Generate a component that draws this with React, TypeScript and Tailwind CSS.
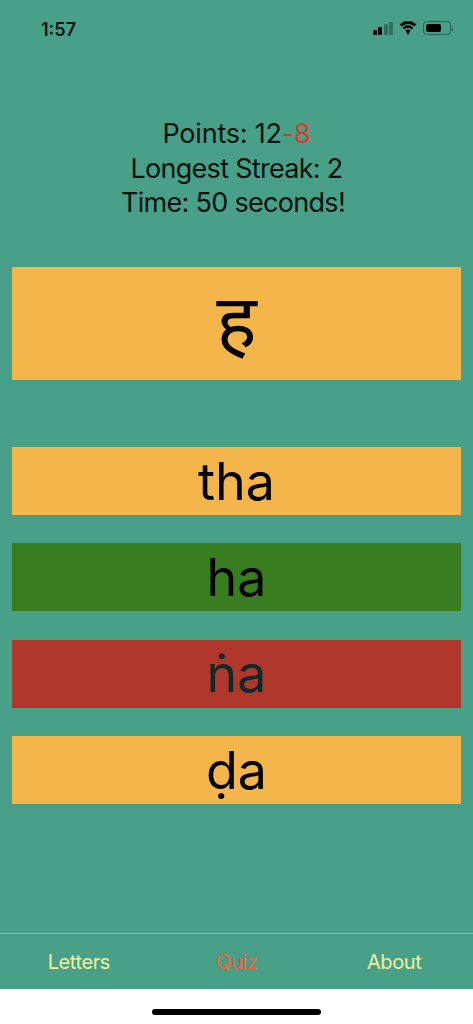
const answers = [
  { label: 'tha', className: 'bg-[#f4b54b] text-black' },
  { label: 'ha', className: 'bg-[#387d20] text-black' },
  { label: 'ṅa', className: 'bg-[#b0372c] text-[#10292a]' },
  { label: 'ḍa', className: 'bg-[#f4b54b] text-black' },
];

function StatusBar() {
  return (
    <div className="flex h-[57px] items-center justify-between pl-[41px] pr-[20px] pt-[1px]">
      <span className="text-[18px] font-semibold text-[#0b1512]">1:57</span>
      <div className="mb-[2px] flex items-center gap-[6px]">
        <div className="flex items-end gap-[1.5px]">
          <div className="h-[5px] w-[4px] rounded-[1px] bg-black" />
          <div className="h-[8px] w-[4px] rounded-[1px] bg-black" />
          <div className="h-[11px] w-[4px] rounded-[1px] bg-[#2f6f5b]" />
          <div className="h-[13px] w-[4px] rounded-[1px] bg-[#2f6f5b]" />
        </div>
        <svg viewBox="0 0 18 14" className="h-[14px] w-[18px] fill-black">
          <path d="M9 2.900c2.500 0 4.700.9 6.400 2.500l1.900-2A11.800 11.800 0 0 0 9 0 11.800 11.800 0 0 0 .7 3.400l1.900 2A9.200 9.200 0 0 1 9 2.900z" />
          <path d="M9 7c1.300 0 2.500.5 3.500 1.400l1.900-2A7.800 7.800 0 0 0 9 4.200a7.800 7.800 0 0 0-5.400 2.200l1.900 2C6.500 7.500 7.700 7 9 7z" />
          <path d="M9 8.400c-1 0-2 .4-2.600 1.100L9 14l2.600-4.500C11 8.800 10 8.400 9 8.400z" />
        </svg>
        <div className="flex items-center gap-[1px]">
          <div className="flex h-[14px] w-[28px] items-center rounded-[4px] border border-[#2a6352] p-[2px]">
            <div className="h-full w-[15px] rounded-[2px] bg-black" />
          </div>
          <div className="h-[5px] w-[1px] rounded-r bg-[#2a6352]" />
        </div>
      </div>
    </div>
  );
}

export default function App() {
  return (
    <div className="flex h-[1024px] w-[473px] flex-col overflow-hidden bg-white font-['Inter',sans-serif]">
      <div className="flex h-[989px] flex-col bg-[#48a088]">
        <StatusBar />
        <div className="mt-[60px] text-center text-[27px] leading-[34.5px] text-[#06120f]">
          <p className="tracking-[-0.2px]">
            Points: 12<span className="text-[#e0392b]">-8</span>
          </p>
          <p className="tracking-[-0.7px]">Longest Streak: 2</p>
          <p className="pr-[7px] tracking-[-0.7px]">Time: 50 seconds!</p>
        </div>
        <div className="mx-3 mt-[46.5px] flex h-[113px] items-center justify-center bg-[#f4b54b] pb-[10px] font-['Noto_Sans',sans-serif] text-[76px] leading-none text-black">
          ह
        </div>
        <div className="mt-[67px] flex flex-col gap-[28.4px] px-3">
          {answers.map((answer) => (
            <div
              key={answer.label}
              className={`flex h-[68px] items-center justify-center pt-[1px] text-[52px] leading-none ${answer.className}`}
            >
              {answer.label}
            </div>
          ))}
        </div>
        <div className="mt-auto flex h-[56px] items-center border-t border-[#86bfae] pt-[1px] text-[20px] tracking-[-0.4px]">
          <span className="flex-1 text-center text-[#f0f29c]">Letters</span>
          <span className="flex-1 text-center text-[#e8623c]">Quiz</span>
          <span className="flex-1 text-center text-[#f0f29c]">About</span>
        </div>
      </div>
      <div className="flex flex-1 items-start justify-center pt-[20px]">
        <div className="h-[6px] w-[169px] rounded-full bg-black" />
      </div>
    </div>
  );
}
